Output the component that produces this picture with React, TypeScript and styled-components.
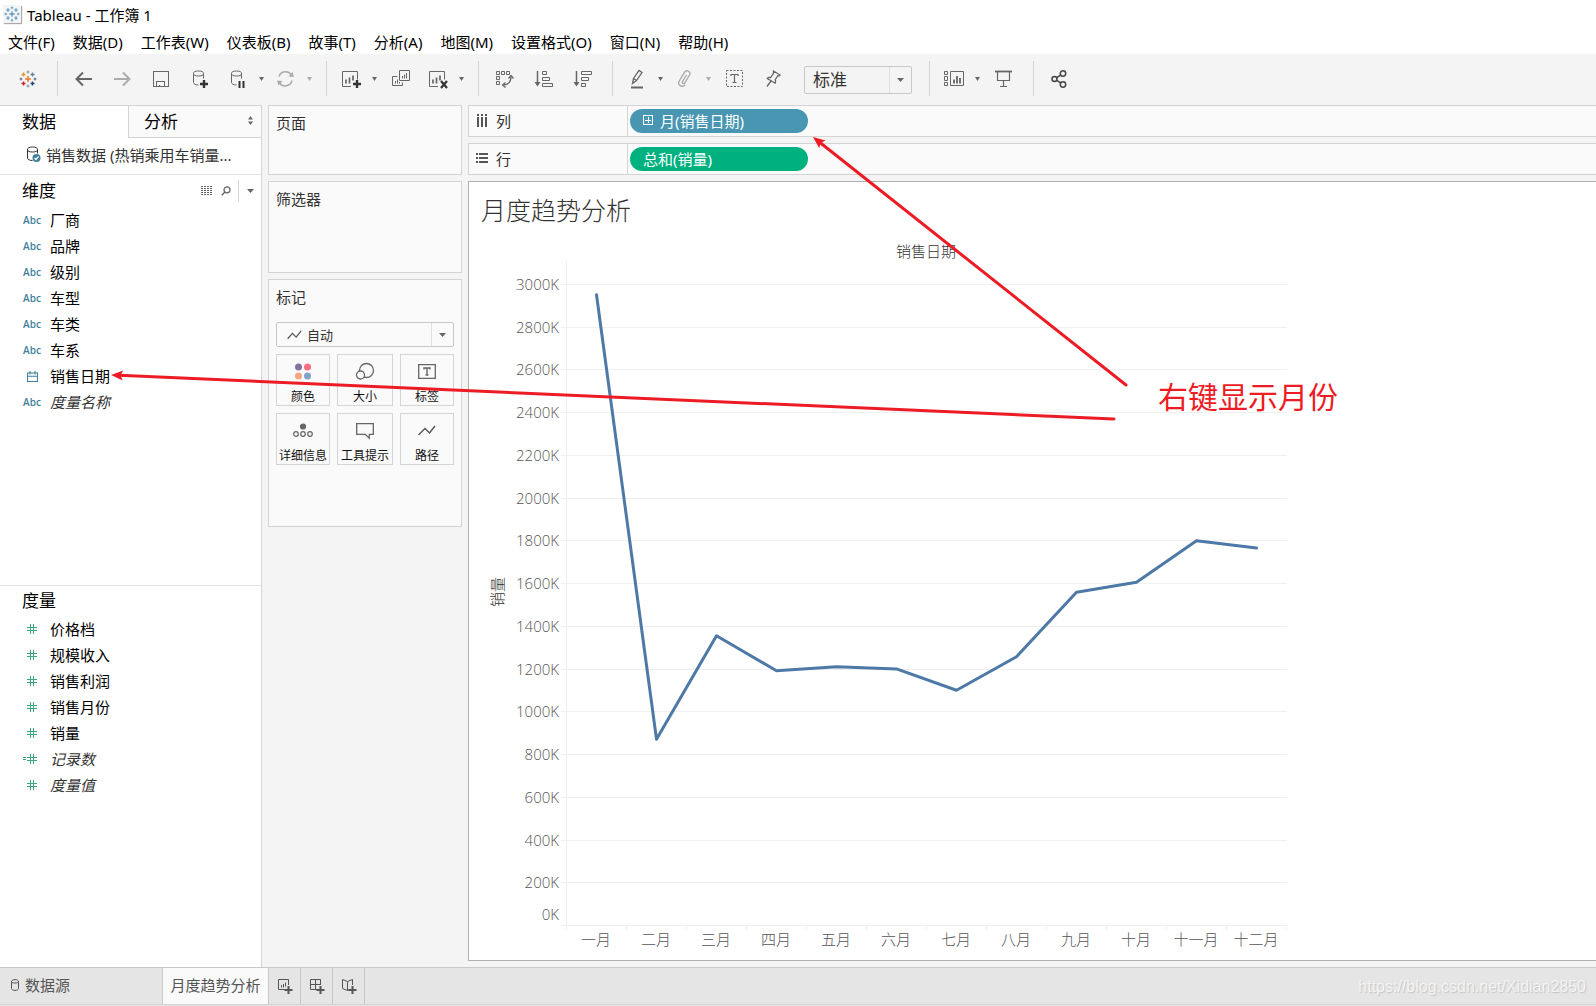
import React from "react";
import styled, { createGlobalStyle, css } from "styled-components";

const GlobalStyle = createGlobalStyle`
  *, *::before, *::after { box-sizing: border-box; }
  html, body { margin: 0; padding: 0; }
  body {
    font-family: "Noto Sans", "Noto Sans CJK SC", sans-serif;
    font-size: 15px;
    color: #000;
    background: #f4f4f4;
    overflow: hidden;
  }
  button, select {
    font: inherit;
    color: inherit;
    margin: 0;
    padding: 0;
    border: 0;
    background: none;
    border-radius: 0;
  }
  svg { display: block; flex: none; }
  h1, h2, ul { margin: 0; padding: 0; font-weight: 400; list-style: none; }
`;

const line = "#d4d4d4";

/* ---------- frame ---------- */

const Window = styled.div`
  position: relative;
  display: flex;
  flex-direction: column;
  height: 100vh;
  min-height: 720px;
`;

const TitleBar = styled.header`
  display: flex;
  align-items: center;
  gap: 6px;
  height: 29px;
  padding: 0 0 1px 3px;
  background: #fff;
`;

const AppBadge = styled.span`
  display: grid;
  place-items: center;
  width: 18px;
  height: 18px;
  background: #f4f4f4;
  box-shadow: 1px 1px 1px #aaa;
`;

const MenuBar = styled.nav`
  display: flex;
  align-items: center;
  gap: 18px;
  height: 25px;
  padding: 2px 8px 0;
  background: #fff;
`;

const MenuItem = styled.button`
  line-height: 23px;
  white-space: nowrap;
`;

const Toolbar = styled.div`
  display: flex;
  align-items: center;
  height: 51px;
  padding: 0 8px 2px;
  background: #f4f4f4;
  color: #666;
`;

const ToolSeparator = styled.span`
  flex: none;
  width: 1px;
  height: 35px;
  margin: 0 6px 0 10px;
  background: ${line};
`;

const ToolButton = styled.button<{ $menu?: boolean; $off?: boolean }>`
  display: grid;
  place-items: center;
  flex: none;
  width: ${(p) => (p.$menu ? 35 : 39)}px;
  height: 36px;
  opacity: ${(p) => (p.$off ? 0.5 : 1)};
`;

const CaretButton = styled.button<{ $off?: boolean }>`
  display: grid;
  place-items: center;
  flex: none;
  width: 13px;
  height: 36px;
  opacity: ${(p) => (p.$off ? 0.5 : 1)};
`;

const SelectFrame = styled.div<{ $tool?: boolean }>`
  display: flex;
  align-items: center;
  height: ${(p) => (p.$tool ? 28 : 25)}px;
  border: 1px solid #c8c8c8;
  border-radius: 2px;
  color: #333;
  ${(p) =>
    p.$tool
      ? css`
          flex: none;
          width: 108px;
          margin: 2px 7px 0 11px;
          font-size: 17px;
        `
      : css`
          margin-bottom: 7px;
          padding-left: 10px;
          gap: 5px;
          font-size: 13px;
        `}
`;

const SelectBox = styled.select<{ $pad?: boolean }>`
  appearance: none;
  flex: 1;
  min-width: 0;
  height: 100%;
  padding-left: ${(p) => (p.$pad ? 8 : 0)}px;
  outline: none;
`;

const SelectArrow = styled.span`
  display: grid;
  place-items: center;
  width: 22px;
  height: 100%;
  border-left: 1px solid #e0e0e0;
  color: #666;
  pointer-events: none;
`;

/* ---------- data pane ---------- */

const Workspace = styled.main`
  display: grid;
  grid-template-columns: 262px 194px minmax(0, 1fr);
  column-gap: 6px;
  flex: 1;
  min-height: 0;
`;

const DataPane = styled.aside`
  display: flex;
  flex-direction: column;
  min-height: 0;
  background: #fff;
  border-top: 1px solid ${line};
  border-right: 1px solid ${line};
`;

const PaneTabs = styled.div`
  display: grid;
  grid-template-columns: 128px 1fr;
  height: 32px;
`;

const PaneTab = styled.button<{ $active?: boolean }>`
  display: flex;
  align-items: center;
  justify-content: space-between;
  font-size: 17px;
  ${(p) =>
    p.$active
      ? css`
          padding: 0 0 3px 22px;
        `
      : css`
          padding: 0 7px 2px 15px;
          background: #fafafa;
          border-left: 1px solid ${line};
          border-bottom: 1px solid ${line};
        `}
`;

const SourceRow = styled.button`
  display: flex;
  align-items: center;
  gap: 5px;
  height: 37px;
  padding: 0 0 3px 26px;
  border-bottom: 1px solid #e4e4e4;
  color: #333;
`;

const FieldSection = styled.section<{ $grow: number; $head: number }>`
  flex: ${(p) => p.$grow} 1 0;
  min-height: 0;
  overflow: hidden;

  & + & {
    border-top: 1px solid #e4e4e4;
  }

  & > header {
    display: flex;
    align-items: center;
    height: ${(p) => p.$head}px;
    padding: 0 7px 0 22px;
    color: #666;
  }
`;

const SectionTitle = styled.h2`
  flex: 1;
  font-size: 17px;
  line-height: 24px;
  color: #000;
`;

const HeaderTool = styled.button`
  display: grid;
  place-items: center;
  width: 19px;
  height: 22px;
`;

const HeaderMenu = styled.button`
  display: grid;
  place-items: center;
  width: 16px;
  height: 22px;
  margin-left: 3px;
  padding-left: 8px;
  border-left: 1px solid ${line};
`;

const FieldRow = styled.li<{ $generated?: boolean }>`
  display: grid;
  grid-template-columns: 20px 1fr;
  align-items: center;
  column-gap: 8px;
  height: 26px;
  padding: 0 0 2px 22px;
  ${(p) =>
    p.$generated &&
    css`
      font-style: italic;
      color: #333;
    `}
`;

const FieldIcon = styled.span`
  display: grid;
  place-items: center;
  padding-top: 2px;
  font: 600 10px "Open Sans", "Noto Sans", sans-serif;
  color: #3f7f9c;
`;

/* ---------- cards ---------- */

const CardColumn = styled.div`
  display: flex;
  flex-direction: column;
  gap: 6px;
`;

const Card = styled.section<{ $h: number }>`
  min-height: ${(p) => p.$h}px;
  padding: 4px 7px 0;
  border: 1px solid ${line};
  background: #fafafa;
`;

const CardTitle = styled.h2`
  font-size: 15px;
  line-height: 26px;
  color: #333;
`;

const MarksTitle = styled(CardTitle)`
  margin-bottom: 12px;
`;

const MarkGrid = styled.div`
  display: grid;
  grid-template-columns: 54fr 56fr 54fr;
  gap: 7px;
`;

const MarkButton = styled.button`
  display: flex;
  flex-direction: column;
  align-items: center;
  justify-content: space-between;
  height: 52px;
  padding: 6px 0 0;
  border: 1px solid ${line};
  font-size: 12px;
  line-height: 17px;
  white-space: nowrap;
  color: #111;
`;

/* ---------- shelves and view ---------- */

const ViewColumn = styled.div`
  display: flex;
  flex-direction: column;
  gap: 6px;
  min-height: 0;
  padding-bottom: 6px;
`;

const Shelf = styled.div`
  display: grid;
  grid-template-columns: 159px 1fr;
  flex: none;
  height: 32px;
  border: 1px solid ${line};
  border-right: 0;
  background: #fafafa;
`;

const ShelfLabel = styled.div`
  display: flex;
  align-items: center;
  gap: 8px;
  padding: 0 0 2px 7px;
  border-right: 1px solid ${line};
  color: #333;
`;

const ShelfDrop = styled.div`
  display: flex;
  align-items: center;
  padding-left: 2px;
`;

const Pill = styled.button<{ $color: string }>`
  display: flex;
  align-items: center;
  gap: 7px;
  width: 178px;
  height: 24px;
  padding: 0 0 2px 13px;
  border-radius: 12px;
  background: ${(p) => p.$color};
  color: #fff;
`;

const View = styled.section`
  flex: 1;
  min-height: 0;
  overflow: hidden;
  border: 1px solid #b0b0b0;
  border-right: 0;
  background: #fff;
`;

const ViewTitle = styled.h1`
  padding-left: 12px;
  font-size: 25px;
  font-weight: 300;
  line-height: 56px;
  color: #333;
`;

const ChartSvg = styled.svg`
  overflow: visible;

  text {
    font-size: 15px;
    font-weight: 300;
    fill: #555;
  }
  text.title {
    fill: #333;
  }
  text.value {
    font-family: "Open Sans", "Noto Sans", sans-serif;
  }
`;

/* ---------- sheet tabs ---------- */

const SheetBar = styled.footer`
  display: flex;
  flex: none;
  height: 39px;
  padding-bottom: 1px;
  border-top: 1px solid #c8c8c8;
  background: #e5e5e5;
  color: #555;
`;

const SheetTab = styled.button<{ $active?: boolean; $source?: boolean }>`
  display: flex;
  align-items: center;
  justify-content: ${(p) => (p.$source ? "flex-start" : "center")};
  gap: 5px;
  flex: none;
  width: ${(p) => (p.$source ? 163 : 106)}px;
  padding: 0 0 3px ${(p) => (p.$source ? 11 : 0)}px;
  border-right: 1px solid #c8c8c8;
  border-bottom: 1px solid ${line};
  background: ${(p) => (p.$active ? "#fafafa" : "transparent")};
`;

const NewSheetButton = styled.button`
  display: grid;
  place-items: center;
  flex: none;
  width: 32px;
  border-right: 1px solid #c8c8c8;
  border-bottom: 1px solid ${line};
`;

const Watermark = styled.div`
  flex: 1;
  padding-right: 10px;
  border-bottom: 1px solid ${line};
  text-align: right;
  font: 16px/38px "Liberation Sans", Arial, sans-serif;
  color: #f3f3f3;
  text-shadow: 1px 1px 1px #c4c4c4;
`;

/* ---------- annotations over the window ---------- */

const ArrowLayer = styled.svg`
  position: absolute;
  left: 0;
  top: 0;
  pointer-events: none;
`;

const Note = styled.p`
  position: absolute;
  left: 1158px;
  top: 375px;
  margin: 0;
  font-size: 30px;
  line-height: 44px;
  color: #ed1c24;
`;

/* ---------- icons ---------- */

type G = { children: React.ReactNode; w?: number; h?: number; crisp?: boolean };
const Glyph = ({ children, w = 20, h = 20, crisp }: G) => (
  <svg
    width={w}
    height={h}
    viewBox={`0 0 ${w} ${h}`}
    fill="none"
    stroke="currentColor"
    strokeWidth="1"
    shapeRendering={crisp ? "crispEdges" : undefined}
    aria-hidden="true"
  >
    {children}
  </svg>
);

const Caret = ({ w = 5 }: { w?: number }) => (
  <svg width={w} height="4" viewBox="0 0 7 5" preserveAspectRatio="none" aria-hidden="true">
    <path d="M0 0h7L3.5 5z" fill="currentColor" />
  </svg>
);

const Sparkle = ({ colors, size }: { colors: string[]; size: number }) => (
  <svg width={size} height={size} viewBox="0 0 18 18" fill="none" aria-hidden="true">
    <path d="M9 6v6M6 9h6" stroke={colors[0]} strokeWidth="1.5" />
    <path d="M4.5 2.5v4M2.5 4.5h4" stroke={colors[1]} strokeWidth="1.4" />
    <path d="M13.5 2.5v4M11.5 4.5h4" stroke={colors[2]} strokeWidth="1.4" />
    <path d="M4.5 11.5v4M2.5 13.5h4" stroke={colors[3]} strokeWidth="1.4" />
    <path d="M13.5 11.5v4M11.5 13.5h4" stroke={colors[4]} strokeWidth="1.4" />
    <path d="M9 .5v3M7.5 2h3M9 14.5v3M7.5 16h3" stroke={colors[5]} strokeWidth="1" />
    <path d="M.5 9h3M2 7.5v3M14.5 9h3M16 7.5v3" stroke={colors[6]} strokeWidth="1" />
  </svg>
);

const DbShape = () => (
  <>
    <ellipse cx="6.5" cy="4.5" rx="5" ry="2.5" />
    <path d="M1.5 4.5v9c0 1.4 2 2.5 5 2.5M11.5 4.5v5" />
  </>
);

const PlusMark = ({ x, y }: { x: number; y: number }) => (
  <path d={`M${x} ${y - 4}v8M${x - 4} ${y}h8`} stroke="#333" strokeWidth="2.4" />
);

const IconBack = () => (
  <Glyph>
    <path d="M18 10H3M9 3.5L2.5 10 9 16.5" strokeWidth="2" />
  </Glyph>
);
const IconForward = () => (
  <Glyph>
    <path d="M1 10h15M10 3.5l6.5 6.5-6.5 6.5" strokeWidth="2" />
  </Glyph>
);
const IconSave = () => (
  <Glyph crisp>
    <path d="M1.500 2.500h15v15h-15zM4.500 17.500v-5h8v5M7.500 17.500v-2" />
  </Glyph>
);
const IconDbAdd = () => (
  <Glyph w={18}>
    <DbShape />
    <PlusMark x={12} y={15} />
  </Glyph>
);
const IconDbPause = () => (
  <Glyph w={16}>
    <DbShape />
    <path d="M9.500 12v7M13.500 12v7" stroke="#333" strokeWidth="2" />
  </Glyph>
);
const IconRefresh = () => (
  <Glyph>
    <path d="M3 7.500A7 7 0 0 1 15.500 6M16 11.500A7 7 0 0 1 3.500 14" strokeWidth="1.500" />
    <path d="M12.500 7.500l5.500.5-1.500-5zM6.500 12l-5.500-.5 1.500 5z" fill="currentColor" stroke="none" />
  </Glyph>
);
const ChartBox = () => (
  <>
    <path d="M10 17.500H1.500v-15h15v8" />
    <path d="M5 10.500v4M8.500 8.500v6M12 6.500v5" strokeWidth="1.700" />
  </>
);
const IconNewSheet = () => (
  <Glyph w={20}>
    <ChartBox />
    <PlusMark x={16} y={15} />
  </Glyph>
);
const IconClearSheet = () => (
  <Glyph w={20}>
    <ChartBox />
    <path d="M13 12l6 7M19 12l-6 7" stroke="#333" strokeWidth="2.200" />
  </Glyph>
);
const IconDuplicate = () => (
  <Glyph w={20}>
    <path d="M8.500 1.500h10v10h-10zM6.500 7.500h-5v9h10v-3" />
    <path d="M11.500 7v2.500M13.500 5.500v4M15.500 4v5.500M4.500 12v2.500M6.500 10.500v4M8.500 13v1.500" />
  </Glyph>
);
const IconSwap = () => (
  <Glyph>
    <path d="M1.500 2.500h3v3h-3zM6.500 2.500h3v3h-3zM11.500 2.500h3v3h-3zM1.500 7.500h3v3h-3zM1.500 12.500h3v3h-3z" />
    <path d="M16 8c0 5-2.500 7.500-7.500 8" strokeWidth="1.300" />
    <path d="M13.500 9.500L16 6.500l2.500 3M10.500 13.500L7.500 16l3 2.500" strokeWidth="1.300" />
  </Glyph>
);
const IconSortAsc = () => (
  <Glyph>
    <path d="M3.500 2v14" strokeWidth="1.500" />
    <path d="M.5 13h6l-3 4.500z" fill="currentColor" stroke="none" />
    <path d="M8.500 2.500h4v3h-4zM8.500 8.500h7v3h-7zM8.500 14.500h10v3h-10z" />
  </Glyph>
);
const IconSortDesc = () => (
  <Glyph>
    <path d="M3.500 2v14" strokeWidth="1.500" />
    <path d="M.5 13h6l-3 4.500z" fill="currentColor" stroke="none" />
    <path d="M8.500 2.500h10v3h-10zM8.500 8.500h7v3h-7zM8.500 14.500h4v3h-4z" />
  </Glyph>
);
const IconHighlight = () => (
  <Glyph>
    <path d="M5.500 14.500l1-5 5.500-8 3 2-5.500 8zM6.500 9.500l3 2" strokeWidth="1.300" />
    <path d="M4 18.500h12" strokeWidth="2" />
  </Glyph>
);
const IconClip = () => (
  <Glyph>
    <path
      d="M11.500 6l-4 6.500c-1 1.700 1.200 3 2.300 1.300l4.500-7.300c2.200-3.700-2.600-6.600-4.900-3L4.500 11.500c-2.800 4.700 3 7.500 5.500 4.500"
      strokeWidth="1.400"
    />
  </Glyph>
);
const IconLabelBox = () => (
  <Glyph>
    <path d="M1.500 1.500h16v16h-16z" strokeDasharray="2 1.500" />
    <path d="M6 7V5.500h7V7M9.500 5.500v8M7.500 13.500h4" strokeWidth="1.200" />
  </Glyph>
);
const IconPin = () => (
  <Glyph>
    <path
      d="M9.500 2l6.500 4-1.200 1-1-.3-2.600 4c.7 1.200.6 2.400 0 3.500L3.300 9.500c.8-1 2-1.300 3.400-.9l2.800-4.300zM7 12l-4 5.500"
      strokeWidth="1.300"
    />
  </Glyph>
);
const IconShowMe = () => (
  <Glyph w={22}>
    <path d="M1.500 2.500h3v3h-3zM1.500 7.500h3v4h-3zM1.500 13.500h3v3h-3zM7.500 2.500h13v14h-13z" />
    <path d="M11 10.500v4M14 7v7.500M17 9v5.500" strokeWidth="1.800" />
  </Glyph>
);
const IconPresent = () => (
  <Glyph>
    <path d="M1 2.500h17" strokeWidth="1.800" />
    <path d="M3.500 3v8.500h12V3M9.500 11.500v6M6 17.500h7" strokeWidth="1.200" />
  </Glyph>
);
const IconShare = () => (
  <Glyph>
    <g strokeWidth="1.500" stroke="#444">
      <circle cx="4.500" cy="10" r="2.500" />
      <circle cx="13" cy="4.500" r="2.700" />
      <circle cx="13" cy="15.500" r="2.700" />
      <path d="M6.700 8.700l4-2.600M6.700 11.300l4 2.600" />
    </g>
  </Glyph>
);

const IconSource = () => (
  <Glyph w={15} h={17}>
    <ellipse cx="6.500" cy="3.500" rx="5" ry="2.500" />
    <path d="M1.500 3.500v8.500c0 1.500 2 2.500 5 2.500M11.500 3.500v4" />
    <circle cx="10.500" cy="12" r="4" fill="#3f7f9c" stroke="none" />
    <path d="M8.500 12l1.500 1.500 2.500-3" stroke="#fff" strokeWidth="1.200" />
  </Glyph>
);
const IconGrid = () => (
  <Glyph w={12} h={10} crisp>
    <path d="M0 .5h12M0 2.500h12M0 4.500h12M0 6.500h12M0 8.500h12" strokeDasharray="2 1" />
  </Glyph>
);
const IconSearch = () => (
  <Glyph w={10} h={10}>
    <circle cx="6" cy="3.800" r="3" strokeWidth="1.300" />
    <path d="M4 6L.7 9.300" strokeWidth="1.500" />
  </Glyph>
);
const IconDate = () => (
  <Glyph w={11} h={11}>
    <path d="M.5 2h10v8.500H.5zM.5 5.200h10M3 0v3.500M8 0v3.500" strokeWidth="1.100" />
  </Glyph>
);
const IconNumber = ({ calc }: { calc?: boolean }) => (
  <svg width="20" height="10" viewBox="0 0 20 10" stroke="#3aa57a" fill="none" shapeRendering="crispEdges">
    <path d="M5 3.500h10M5 6.500h10M8.500 0v10M11.500 0v10" />
    {calc && <path d="M1 3.500h3M1 5.500h3" />}
  </svg>
);
const IconColumns = () => (
  <Glyph w={12} h={13} crisp>
    <path d="M2 0v2M2 3v10M6 0v2M6 3v10M10 0v2M10 3v10" stroke="#555" strokeWidth="2" />
  </Glyph>
);
const IconRows = () => (
  <Glyph w={12} h={12} crisp>
    <path d="M0 2h2M3 2h9M0 6h2M3 6h9M0 10h2M3 10h9" stroke="#555" strokeWidth="2" />
  </Glyph>
);
const IconExpand = () => (
  <Glyph w={10} h={10} crisp>
    <path d="M.5 .5h9v9h-9zM2 5h6M5 2v6" />
  </Glyph>
);
const IconLine = ({ w = 18 }: { w?: number }) => (
  <svg width={w} height={(w * 12) / 18} viewBox="0 0 18 12" fill="none" stroke="#555" strokeWidth="1.500" aria-hidden="true">
    <path d="M.8 10.500L6.500 4l4.500 4.500L17 1" />
  </svg>
);

const markIcons: Record<string, React.ReactNode> = {
  颜色: (
    <Glyph w={18} h={20}>
      <g stroke="none">
        <circle cx="4.500" cy="6" r="3.500" fill="#86709d" />
        <circle cx="13.500" cy="6" r="3.500" fill="#f96f7f" />
        <circle cx="4.500" cy="15" r="3.500" fill="#f4a77e" />
        <circle cx="13.500" cy="15" r="3.500" fill="#7fa3cc" />
      </g>
    </Glyph>
  ),
  大小: (
    <Glyph>
      <g stroke="#666" strokeWidth="1.300">
        <circle cx="11.500" cy="9.500" r="7" />
        <circle cx="5.500" cy="14" r="4" fill="#fafafa" />
      </g>
    </Glyph>
  ),
  标签: (
    <Glyph>
      <path d="M1.700 3.700h16.600v13.600H1.700z" stroke="#666" strokeWidth="1.300" />
      <path d="M7 8.500V7h6v1.500M10 7v7M8.500 14h3" stroke="#666" strokeWidth="1.400" />
    </Glyph>
  ),
  详细信息: (
    <Glyph>
      <g stroke="#666" strokeWidth="1.200">
        <circle cx="10" cy="6.500" r="2.500" fill="#666" />
        <circle cx="3" cy="14" r="2.300" />
        <circle cx="10" cy="14" r="2.300" />
        <circle cx="17" cy="14" r="2.300" />
      </g>
    </Glyph>
  ),
  工具提示: (
    <Glyph>
      <path d="M1.700 3.700h16.600v10.600h-4v4l-4-4H1.700z" stroke="#666" strokeWidth="1.300" />
    </Glyph>
  ),
  路径: (
    <Glyph>
      <path d="M1.500 15L8 8.500l4.500 4.500L18 6" stroke="#555" strokeWidth="1.400" />
    </Glyph>
  ),
};

/* ---------- data ---------- */

const menus = ["文件(F)", "数据(D)", "工作表(W)", "仪表板(B)", "故事(T)", "分析(A)", "地图(M)", "设置格式(O)", "窗口(N)", "帮助(H)"];

type Field = { name: string; kind: "text" | "date" | "number" | "calc"; generated?: boolean };

const dimensions: Field[] = [
  { name: "厂商", kind: "text" },
  { name: "品牌", kind: "text" },
  { name: "级别", kind: "text" },
  { name: "车型", kind: "text" },
  { name: "车类", kind: "text" },
  { name: "车系", kind: "text" },
  { name: "销售日期", kind: "date" },
  { name: "度量名称", kind: "text", generated: true },
];

const measures: Field[] = [
  { name: "价格档", kind: "number" },
  { name: "规模收入", kind: "number" },
  { name: "销售利润", kind: "number" },
  { name: "销售月份", kind: "number" },
  { name: "销量", kind: "number" },
  { name: "记录数", kind: "calc", generated: true },
  { name: "度量值", kind: "number", generated: true },
];

const sales: [string, number][] = [
  ["一月", 2952],
  ["二月", 872],
  ["三月", 1356],
  ["四月", 1192],
  ["五月", 1211],
  ["六月", 1201],
  ["七月", 1101],
  ["八月", 1258],
  ["九月", 1560],
  ["十月", 1606],
  ["十一月", 1801],
  ["十二月", 1767],
];

/* ---------- parts ---------- */

const Fields = ({ items }: { items: Field[] }) => (
  <ul>
    {items.map((f) => (
      <FieldRow key={f.name} $generated={f.generated}>
        <FieldIcon>
          {f.kind === "text" && "Abc"}
          {f.kind === "date" && <IconDate />}
          {f.kind === "number" && <IconNumber />}
          {f.kind === "calc" && <IconNumber calc />}
        </FieldIcon>
        {f.name}
      </FieldRow>
    ))}
  </ul>
);

const Tool = ({ label, off, menu, children }: { label: string; off?: boolean; menu?: boolean; children: React.ReactNode }) => (
  <>
    <ToolButton aria-label={label} $off={off} $menu={menu}>
      {children}
    </ToolButton>
    {menu && (
      <CaretButton aria-label={`${label} ▾`} $off={off}>
        <Caret />
      </CaretButton>
    )}
  </>
);

const PLOT = { left: 97, top: 23, bottom: 687, step: 60 };
const yOf = (v: number) => PLOT.bottom - (v * 641) / 3000;
const right = PLOT.left + PLOT.step * sales.length;

const Chart = () => (
  <ChartSvg width="830" height="720" role="img" aria-label="月度趋势分析">
    <text className="title" x={(PLOT.left + right) / 2} y="19" textAnchor="middle">
      销售日期
    </text>
    <text className="title" transform="translate(34 354) rotate(-90)" textAnchor="middle">
      销量
    </text>
    <g stroke="#efefef" shapeRendering="crispEdges">
      {Array.from({ length: 16 }, (_, i) => {
        const y = Math.round(yOf(i * 200)) + 0.5;
        return <path key={i} d={`M${PLOT.left - 5} ${y}H${right + 1}`} />;
      })}
      <path d={`M${PLOT.left + 0.5} ${PLOT.top}V${PLOT.bottom + 5}`} />
      {sales.map(([m], i) => (
        <path key={m} d={`M${PLOT.left + (i + 1) * PLOT.step + 0.5} ${PLOT.bottom}v5`} />
      ))}
    </g>
    {Array.from({ length: 16 }, (_, i) => (
      <text key={i} className="value" x={PLOT.left - 7} y={(i ? Math.round(yOf(i * 200)) : PLOT.bottom - 11) + 6} textAnchor="end">
        {i * 200}K
      </text>
    ))}
    {sales.map(([m], i) => (
      <text key={m} x={PLOT.left + (i + 0.5) * PLOT.step} y={PLOT.bottom + 20} textAnchor="middle">
        {m}
      </text>
    ))}
    <polyline
      fill="none"
      stroke="#4e79a7"
      strokeWidth="3"
      strokeLinejoin="round"
      strokeLinecap="round"
      points={sales.map(([, v], i) => `${PLOT.left + (i + 0.5) * PLOT.step + 0.5},${yOf(v) + 0.5}`).join(" ")}
    />
  </ChartSvg>
);

const Arrow = ({ from, to }: { from: [number, number]; to: [number, number] }) => {
  const angle = (Math.atan2(to[1] - from[1], to[0] - from[0]) * 180) / Math.PI;
  const length = Math.hypot(to[0] - from[0], to[1] - from[1]);
  return (
    <g transform={`translate(${from[0]} ${from[1]}) rotate(${angle})`}>
      <path d={`M0 0H${length - 8}`} stroke="#ed1c24" strokeWidth="3" strokeLinecap="round" />
      <path d={`M${length} 0l-12 -5 2.500 5 -2.500 5z`} fill="#ed1c24" />
    </g>
  );
};

export default function App() {
  return (
    <Window>
      <GlobalStyle />
      <TitleBar>
        <AppBadge>
          <Sparkle size={16} colors={Array(7).fill("#5b9bc4")} />
        </AppBadge>
        Tableau - 工作簿 1
      </TitleBar>
      <MenuBar>
        {menus.map((m) => (
          <MenuItem key={m}>{m}</MenuItem>
        ))}
      </MenuBar>

      <Toolbar role="toolbar">
        <Tool label="起始页">
          <Sparkle size={18} colors={["#e8762c", "#eb912c", "#5b879b", "#c72035", "#1f457e", "#7199a6", "#5b6591"]} />
        </Tool>
        <ToolSeparator />
        <Tool label="撤消"><IconBack /></Tool>
        <Tool label="重做" off><IconForward /></Tool>
        <Tool label="保存"><IconSave /></Tool>
        <Tool label="新建数据源"><IconDbAdd /></Tool>
        <Tool label="暂停自动更新" menu><IconDbPause /></Tool>
        <Tool label="运行更新" menu off><IconRefresh /></Tool>
        <ToolSeparator />
        <Tool label="新建工作表" menu><IconNewSheet /></Tool>
        <Tool label="复制"><IconDuplicate /></Tool>
        <Tool label="清除工作表" menu><IconClearSheet /></Tool>
        <ToolSeparator />
        <Tool label="交换行和列"><IconSwap /></Tool>
        <Tool label="升序排序"><IconSortAsc /></Tool>
        <Tool label="降序排序"><IconSortDesc /></Tool>
        <ToolSeparator />
        <Tool label="突出显示" menu><IconHighlight /></Tool>
        <Tool label="组成员" menu off><IconClip /></Tool>
        <Tool label="显示标记标签"><IconLabelBox /></Tool>
        <Tool label="固定轴"><IconPin /></Tool>
        <SelectFrame $tool>
          <SelectBox $pad aria-label="适合" defaultValue="标准">
            <option>标准</option>
          </SelectBox>
          <SelectArrow><Caret w={7} /></SelectArrow>
        </SelectFrame>
        <ToolSeparator />
        <Tool label="显示/隐藏卡" menu><IconShowMe /></Tool>
        <Tool label="演示模式"><IconPresent /></Tool>
        <ToolSeparator />
        <Tool label="共享"><IconShare /></Tool>
      </Toolbar>

      <Workspace>
        <DataPane>
          <PaneTabs>
            <PaneTab $active>数据</PaneTab>
            <PaneTab>
              分析
              <svg width="7" height="9" viewBox="0 0 7 9" fill="#666" aria-hidden="true">
                <path d="M1 3.500h5L3.500 0zM1 5.500h5L3.500 9z" />
              </svg>
            </PaneTab>
          </PaneTabs>
          <SourceRow>
            <IconSource />
            销售数据 (热销乘用车销量...
          </SourceRow>
          <FieldSection $grow={14} $head={32}>
            <header>
              <SectionTitle>维度</SectionTitle>
              <HeaderTool aria-label="查看数据"><IconGrid /></HeaderTool>
              <HeaderTool aria-label="查找字段"><IconSearch /></HeaderTool>
              <HeaderMenu aria-label="菜单"><Caret w={7} /></HeaderMenu>
            </header>
            <Fields items={dimensions} />
          </FieldSection>
          <FieldSection $grow={13} $head={30}>
            <header>
              <SectionTitle>度量</SectionTitle>
            </header>
            <Fields items={measures} />
          </FieldSection>
        </DataPane>

        <CardColumn>
          <Card $h={70}>
            <CardTitle>页面</CardTitle>
          </Card>
          <Card $h={92}>
            <CardTitle>筛选器</CardTitle>
          </Card>
          <Card $h={248}>
            <MarksTitle>标记</MarksTitle>
            <SelectFrame>
              <IconLine w={15} />
              <SelectBox aria-label="标记类型" defaultValue="自动">
                <option>自动</option>
              </SelectBox>
              <SelectArrow><Caret w={7} /></SelectArrow>
            </SelectFrame>
            <MarkGrid>
              {Object.entries(markIcons).map(([name, icon]) => (
                <MarkButton key={name}>
                  {icon}
                  {name}
                </MarkButton>
              ))}
            </MarkGrid>
          </Card>
        </CardColumn>

        <ViewColumn>
          <Shelf>
            <ShelfLabel><IconColumns />列</ShelfLabel>
            <ShelfDrop>
              <Pill $color="#4996b2"><IconExpand />月(销售日期)</Pill>
            </ShelfDrop>
          </Shelf>
          <Shelf>
            <ShelfLabel><IconRows />行</ShelfLabel>
            <ShelfDrop>
              <Pill $color="#00b180">总和(销量)</Pill>
            </ShelfDrop>
          </Shelf>
          <View>
            <ViewTitle>月度趋势分析</ViewTitle>
            <Chart />
          </View>
        </ViewColumn>
      </Workspace>

      <SheetBar>
        <SheetTab $source>
          <Glyph w={9} h={12}>
            <path d="M.5 2.500c0-2.500 7-2.500 7 0v7c0 2.500-7 2.500-7 0zM.5 2.500c0 2 7 2 7 0" />
          </Glyph>
          数据源
        </SheetTab>
        <SheetTab $active>月度趋势分析</SheetTab>
        <NewSheetButton aria-label="新建工作表">
          <Glyph w={16} h={16}>
            <path d="M8 11.500H1.500v-10h10V7M4.500 7v2.500M6.500 6v3.500M8.500 4.500v4" />
            <path d="M11.500 8v8M7.500 12h8" strokeWidth="2" />
          </Glyph>
        </NewSheetButton>
        <NewSheetButton aria-label="新建仪表板">
          <Glyph w={16} h={16}>
            <path d="M8 11.500H1.500v-10h10V7M1.500 6.500h10M6.500 1.500v10" />
            <path d="M11.500 8v8M7.500 12h8" strokeWidth="2" />
          </Glyph>
        </NewSheetButton>
        <NewSheetButton aria-label="新建故事">
          <Glyph w={16} h={16}>
            <path d="M1.500 1.500l5 2v9l-5-2zM6.500 3.500l5-2V7M6.500 12.500l2-1" />
            <path d="M11.500 8v8M7.500 12h8" strokeWidth="2" />
          </Glyph>
        </NewSheetButton>
        <Watermark>https://blog.csdn.net/Xidian2850</Watermark>
      </SheetBar>

      <ArrowLayer width="1200" height="440" fill="none" aria-hidden="true">
        <Arrow from={[1126, 385]} to={[813, 137]} />
        <Arrow from={[1114, 419]} to={[111, 375]} />
      </ArrowLayer>
      <Note>右键显示月份</Note>
    </Window>
  );
}
